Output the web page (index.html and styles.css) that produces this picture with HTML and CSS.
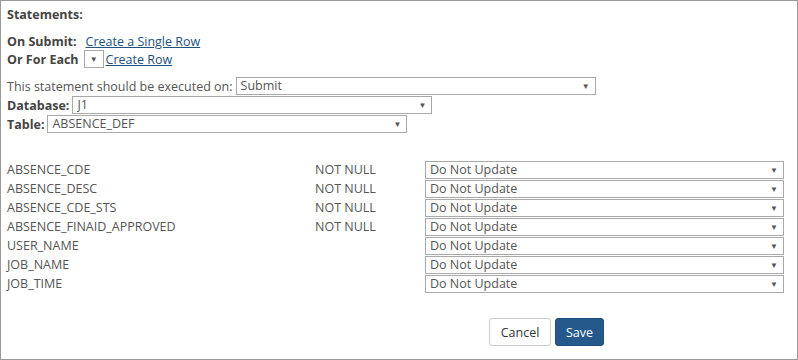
FILE: index.html
```html
<!DOCTYPE html>
<html lang="en">
<head>
	<meta charset="utf-8" />
	<title>Statements</title>
	<link rel="stylesheet" href="styles.css">
</head>
<body>

<div class="frame">
	<h3 class="title">Statements:</h3>

	<div class="line">
		<strong>On Submit:</strong>
		<a href="#" class="submit-link">Create a Single Row</a>
	</div>
	<div class="line">
		<strong>Or For Each</strong>
		<span class="pick pick-small"><select></select></span><a href="#">Create Row</a>
	</div>

	<div class="settings">
		<div class="field">
			<span>This statement should be executed on:</span>
			<span class="pick pick-wide"><select><option>Submit</option></select></span>
		</div>
		<div class="field">
			<strong>Database:</strong>
			<span class="pick pick-wide"><select><option>J1</option></select></span>
		</div>
		<div class="field">
			<strong>Table:</strong>
			<span class="pick pick-wide"><select><option>ABSENCE_DEF</option></select></span>
		</div>
	</div>

	<div class="columns">
		<div class="col-name">ABSENCE_CDE</div>
		<div class="col-null">NOT NULL</div>
		<span class="pick"><select><option>Do Not Update</option></select></span>

		<div class="col-name">ABSENCE_DESC</div>
		<div class="col-null">NOT NULL</div>
		<span class="pick"><select><option>Do Not Update</option></select></span>

		<div class="col-name">ABSENCE_CDE_STS</div>
		<div class="col-null">NOT NULL</div>
		<span class="pick"><select><option>Do Not Update</option></select></span>

		<div class="col-name">ABSENCE_FINAID_APPROVED</div>
		<div class="col-null">NOT NULL</div>
		<span class="pick"><select><option>Do Not Update</option></select></span>

		<div class="col-name">USER_NAME</div>
		<div class="col-null"></div>
		<span class="pick"><select><option>Do Not Update</option></select></span>

		<div class="col-name">JOB_NAME</div>
		<div class="col-null"></div>
		<span class="pick"><select><option>Do Not Update</option></select></span>

		<div class="col-name">JOB_TIME</div>
		<div class="col-null"></div>
		<span class="pick"><select><option>Do Not Update</option></select></span>
	</div>

	<div class="actions">
		<button class="btn btn-cancel">Cancel</button>
		<button class="btn btn-save">Save</button>
	</div>
</div>

</body>
</html>
```

FILE: styles.css
```css
body {
	margin: 0;
	font-family: 'Open Sans', sans-serif;
	font-size: 12.5px;
	color: #555;
}
.frame {
	box-sizing: border-box;
	width: 798px;
	height: 360px;
	border: 1px solid #9a9a9a;
	padding: 5px 6px 0 6px;
}
.title {
	margin: 0 0 8px 0;
	font-size: 12.5px;
	line-height: 18px;
	color: #444;
}
strong {
	color: #444;
}
.line {
	display: flex;
	align-items: center;
	height: 18px;
	white-space: nowrap;
}
.line strong {
	margin-right: 5px;
}
.submit-link {
	margin-left: 4px;
}
a {
	color: #23517e;
	text-decoration: underline;
}
.settings {
	margin-top: 9px;
}
.field {
	display: flex;
	align-items: center;
	height: 18px;
	margin-bottom: 1px;
	white-space: nowrap;
}
.field > span:first-child {
	margin-right: 3px;
}
.field strong {
	margin-right: 3px;
}
.pick {
	position: relative;
	display: inline-block;
	height: 18px;
}
.pick select {
	-webkit-appearance: none;
	appearance: none;
	box-sizing: border-box;
	width: 100%;
	height: 18px;
	margin: 0;
	padding: 0 14px 0 4px;
	border: 1px solid #a9a9a9;
	border-radius: 0;
	background: #fff;
	font-family: 'Open Sans', sans-serif;
	font-size: 12.5px;
	color: #555;
	line-height: 16px;
}
.pick::after {
	content: '\25BC';
	position: absolute;
	right: 6px;
	top: 4px;
	font-size: 8px;
	line-height: 10px;
	color: #555;
	pointer-events: none;
}
.pick-small {
	width: 20px;
	height: 18px;
	margin-right: 2px;
}
.pick-wide {
	width: 360px;
}
.columns {
	display: grid;
	grid-template-columns: 308px 110px 359px;
	grid-auto-rows: 18px;
	row-gap: 1px;
	margin-top: 28px;
}
.col-name,
.col-null {
	line-height: 18px;
	white-space: nowrap;
}
.columns .pick {
	width: 359px;
}
.actions {
	display: flex;
	gap: 4px;
	margin-top: 25px;
	padding-left: 482px;
}
.btn {
	height: 28px;
	border-radius: 3px;
	font-family: 'Open Sans', sans-serif;
	font-size: 12.5px;
	padding: 0 8px;
}
.btn-cancel {
	width: 62px;
	background: #fff;
	border: 1px solid #ccc;
	color: #333;
}
.btn-save {
	width: 49px;
	background: #26598b;
	border: 1px solid #22507d;
	color: #fff;
}
```
